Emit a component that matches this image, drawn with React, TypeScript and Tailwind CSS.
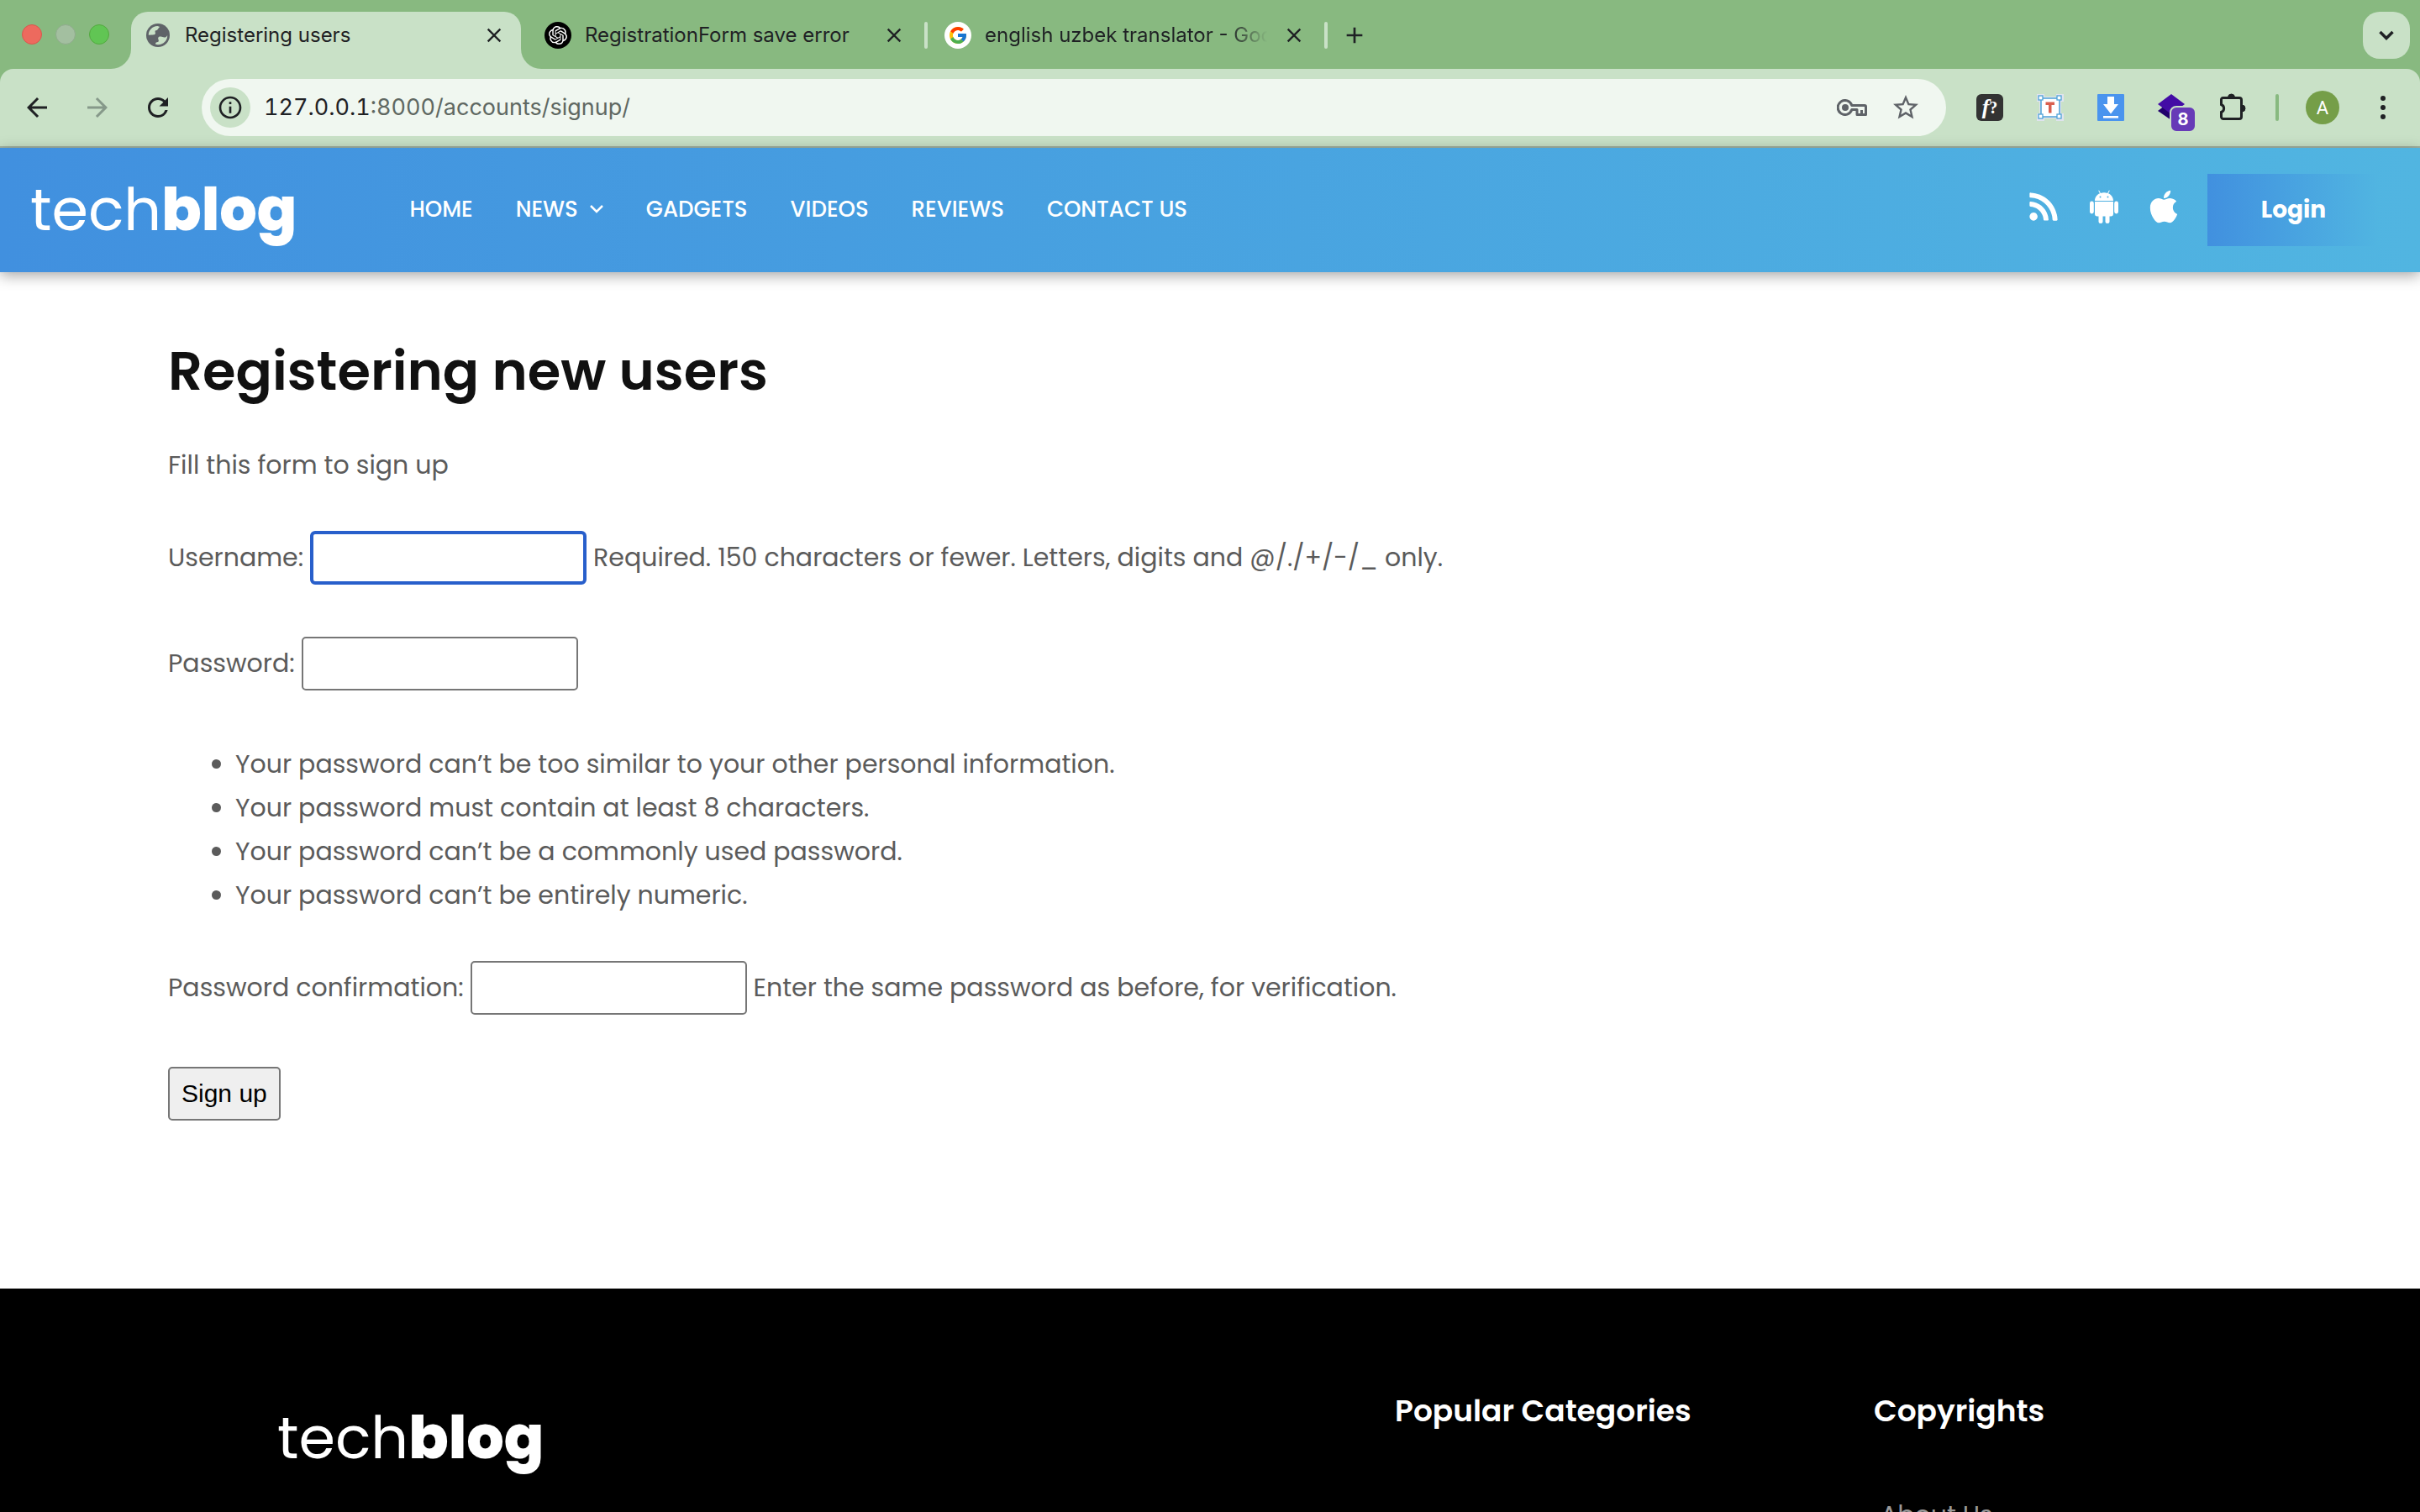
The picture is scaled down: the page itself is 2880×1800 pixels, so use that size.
import React from 'react';
import { SiOpenai } from 'react-icons/si';
import { FcGoogle } from 'react-icons/fc';
import { MdArrowBack, MdArrowForward, MdRefresh, MdClose, MdAdd, MdStarBorder, MdInfoOutline } from 'react-icons/md';
import { FaRss, FaApple } from 'react-icons/fa';

const rules = [
  'Your password can’t be too similar to your other personal information.',
  'Your password must contain at least 8 characters.',
  'Your password can’t be a commonly used password.',
  'Your password can’t be entirely numeric.',
];

function Globe() {
  return (
    <svg viewBox="0 0 28 28" className="size-7 shrink-0" aria-hidden="true">
      <circle cx="14" cy="14" r="14" fill="#5f6368" />
      <path
        d="M2.800 13.800C2.700 8 7 3.200 13.500 2.900L16.300 4C14.500 4.500 14.600 6.800 13 7.800 11.500 8.700 10.800 7.900 10.600 9.300c-.2 1.300.6 1.800.2 3-.4 1.300-2.300 1.100-4 1.100Z"
        fill="#c9e1c7"
      />
      <path
        d="M25.200 14c.2 6-4.500 11.200-11.200 11.200L11.200 24.800c-.3-1.300.2-2.300 1.600-2.500 1.400-.2 2.200-.7 2-2-.2-1.700-1.200-2.400-.3-3.700.6-1 1.600-1.200 2.800-1 1.900.2 3.300 1.200 5.400.8 1.200-.2 1.900-1.400 2.500-2.400Z"
        fill="#c9e1c7"
      />
    </svg>
  );
}

function KeyIcon() {
  return (
    <svg viewBox="0 0 36 20" className="h-5 w-9" fill="none" stroke="#5f6368" strokeWidth="3" aria-hidden="true">
      <path d="M17.800 7.500A8.500 8.500 0 1 0 17.800 12.500H24V18.500H34.500V9Q34.500 7.500 33 7.500Z" strokeLinejoin="round" />
      <circle cx="10" cy="10" r="4" fill="#5f6368" stroke="none" />
      <path d="M29.500 13V18" />
    </svg>
  );
}

function Android() {
  return (
    <svg viewBox="0 0 34 40" className="h-10 w-[34px]" fill="#fff" aria-hidden="true">
      <path d="M6 13C6 8.500 8.800 5.600 12 4.200L10.200 1l.8-.4 1.900 3.300a12.500 12.500 0 0 1 8.200 0L23 .6l.8.4L22 4.200c3.200 1.400 6 4.300 6 8.800Z" />
      <circle cx="12.500" cy="8.500" r="1" fill="#50b0e1" />
      <circle cx="21.500" cy="8.500" r="1" fill="#50b0e1" />
      <path d="M6 14h22v15a2.400 2.400 0 0 1-2.400 2.400H8.400A2.400 2.400 0 0 1 6 29Z" />
      <rect x="0" y="13.500" width="4.800" height="15" rx="2.400" />
      <rect x="29.200" y="13.500" width="4.800" height="15" rx="2.400" />
      <rect x="10.500" y="27" width="5" height="13" rx="2.500" />
      <rect x="18.500" y="27" width="5" height="13" rx="2.500" />
    </svg>
  );
}

function TextBoxIcon() {
  return (
    <svg viewBox="0 0 32 32" className="size-8" aria-hidden="true">
      <path d="M0 0H9V3H23V0H32V9H29V23H32V32H23V29H9V32H0V23H3V9H0Z" fill="#dfe3ee" />
      <rect x="5" y="5" width="22" height="22" fill="#fff" stroke="#4ea3d8" strokeWidth="1.500" />
      <g fill="#fff" stroke="#4ea3d8" strokeWidth="1.300">
        <rect x="2" y="2" width="5" height="5" />
        <rect x="24" y="2" width="5" height="5" />
        <rect x="2" y="24" width="5" height="5" />
        <rect x="24" y="24" width="5" height="5" />
      </g>
      <path d="M10.500 9.500H21V13H17.500V22.500H14V13H10.500Z" fill="#d9604f" />
    </svg>
  );
}

function DownloadIcon() {
  return (
    <svg viewBox="0 0 32 32" className="size-8" aria-hidden="true">
      <rect width="32" height="32" rx="1" fill="#4a94ee" />
      <path d="M12 3h8v9h5L16 23.500 7 12h5Z" fill="#fff" />
      <rect x="7" y="26" width="18" height="2.600" fill="#fff" />
    </svg>
  );
}

function PuzzleIcon() {
  return (
    <svg viewBox="0 0 34 34" className="size-[34px]" aria-hidden="true">
      <path
        d="M5.500 5.500H25A2.500 2.500 0 0 1 27.500 8V28A2.500 2.500 0 0 1 25 30.500H5.500A2.500 2.500 0 0 1 3.500 28.500V22.500A4.800 4.800 0 0 0 3.500 13.500V7.500A2 2 0 0 1 5.500 5.500Z"
        fill="none"
        stroke="#1f2124"
        strokeWidth="3"
      />
      <path d="M11.500 5a4 4 0 0 1 8 0ZM28 14a4 4 0 0 1 0 8Z" fill="#1f2124" stroke="#1f2124" />
    </svg>
  );
}

function CloseButton({ label }: { label: string }) {
  return (
    <button type="button" aria-label={label} className="flex size-8 shrink-0 items-center justify-center text-[#1f2124]">
      <MdClose className="size-7" />
    </button>
  );
}

function BrowserChrome() {
  return (
    <header className="bg-[#88b980] font-['Inter',sans-serif] text-[#1f2124]">
      <div className="flex h-[82px] items-end pr-3">
        <div className="flex h-[82px] w-[132px] shrink-0 items-center gap-4 pl-[26px]">
          <span className="size-6 shrink-0 rounded-full border border-[#d8584d] bg-[#ed6a5e]" />
          <span className="size-6 shrink-0 rounded-full border border-[#90ab8d] bg-[#a3bfa0]" />
          <span className="size-6 shrink-0 rounded-full border border-[#53a93f] bg-[#61c554]" />
        </div>
        <div className="size-6 shrink-0 bg-[#c9e1c7]">
          <div className="size-6 rounded-br-[24px] bg-[#88b980]" />
        </div>
        <div className="flex h-[68px] w-[464px] shrink-0 items-center rounded-t-[20px] bg-[#c9e1c7] pr-4 pb-3 pl-[18px]">
          <Globe />
          <span className="ml-[18px] flex-1 text-2xl">Registering users</span>
          <CloseButton label="Close Registering users" />
        </div>
        <div className="mr-1 size-6 shrink-0 bg-[#c9e1c7]">
          <div className="size-6 rounded-bl-[24px] bg-[#88b980]" />
        </div>
        <div className="flex h-[68px] flex-1 items-center pb-3">
          <span className="flex size-8 shrink-0 items-center justify-center rounded-full bg-black text-white">
            <SiOpenai className="size-[22px]" />
          </span>
          <span className="ml-4 w-[352px] shrink-0 text-2xl">RegistrationForm save error</span>
          <CloseButton label="Close RegistrationForm save error" />
          <span className="mr-5 ml-5 h-8 w-1 shrink-0 rounded-full bg-[#c9e1c7]" />
          <span className="flex size-8 shrink-0 items-center justify-center rounded-full bg-white">
            <FcGoogle className="size-6" />
          </span>
          <span className="ml-4 w-[336px] shrink-0 overflow-hidden whitespace-nowrap text-2xl [mask-image:linear-gradient(to_right,#000_290px,transparent_336px)]">
            english uzbek translator - Google
          </span>
          <span className="ml-4">
            <CloseButton label="Close english uzbek translator" />
          </span>
          <span className="mr-4 ml-5 h-8 w-1 shrink-0 rounded-full bg-[#c9e1c7]" />
          <button type="button" aria-label="New tab" className="flex size-8 items-center justify-center">
            <MdAdd className="size-8" />
          </button>
        </div>
        <button
          type="button"
          aria-label="Search tabs"
          className="mb-3 flex size-14 items-center justify-center rounded-[20px] bg-[#c9e1c7]"
        >
          <svg viewBox="0 0 18 12" className="h-3 w-[18px]" fill="none" stroke="#1f2124" strokeWidth="3.500">
            <path d="M1.500 2 9 9.500 16.500 2" />
          </svg>
        </button>
      </div>

      <div className="flex h-[94px] items-center rounded-t-2xl border-b-2 border-[#a3b3a0] bg-[#c9e1c7] pr-6 pl-6">
        <button type="button" aria-label="Back" className="flex size-10 items-center justify-center">
          <MdArrowBack className="size-9" />
        </button>
        <button type="button" aria-label="Forward" className="ml-8 flex size-10 items-center justify-center text-[#86998a]">
          <MdArrowForward className="size-9" />
        </button>
        <button type="button" aria-label="Reload" className="ml-8 flex size-10 items-center justify-center">
          <MdRefresh className="size-9" />
        </button>
        <div className="ml-8 flex h-[68px] flex-1 items-center rounded-full bg-[#f0f7f0] pr-[30px] pl-[10px]">
          <span className="flex size-12 shrink-0 items-center justify-center rounded-full bg-[#c9e1c7]">
            <MdInfoOutline className="size-8" />
          </span>
          <span className="ml-4 flex-1 text-[27px] text-[#5f6862] tabular-nums">
            <span className="text-[#1f2124]">127.0.0.1</span>:8000/accounts/signup/
          </span>
          <button type="button" aria-label="Passwords" className="mr-7">
            <KeyIcon />
          </button>
          <button type="button" aria-label="Bookmark" className="text-[#5f6368]">
            <MdStarBorder className="size-9" />
          </button>
        </div>
        <div className="ml-9 flex items-center gap-10">
          <button
            type="button"
            aria-label="Font finder"
            className="flex size-8 items-center justify-center rounded-md bg-[#333] font-['Liberation_Serif',serif] text-[26px] leading-8 font-bold text-white"
          >
            <i>f</i>
            <span className="text-xl leading-8">?</span>
          </button>
          <button type="button" aria-label="Text tool">
            <TextBoxIcon />
          </button>
          <button type="button" aria-label="Downloader">
            <DownloadIcon />
          </button>
          <button type="button" aria-label="Layers" className="relative size-8">
            <svg viewBox="0 0 32 32" className="size-8" aria-hidden="true">
              <path d="M0 20 16 8 32 20 16 31Z" fill="#21006b" />
              <path d="M0 12 16 0 32 12 16 24Z" fill="#430ca5" />
            </svg>
            <span className="absolute top-[14px] left-[14px] flex size-8 items-center justify-center rounded-lg border-2 border-[#c9e1c7] bg-[#673ab7] text-xl font-bold text-white">
              8
            </span>
          </button>
          <button type="button" aria-label="Extensions">
            <PuzzleIcon />
          </button>
        </div>
        <span className="ml-[34px] h-8 w-1 rounded-full bg-[#88b980]" />
        <button
          type="button"
          aria-label="Profile"
          className="ml-8 flex size-10 items-center justify-center rounded-full bg-[#759e48] font-['Roboto',sans-serif] text-[22px] text-white"
        >
          A
        </button>
        <button type="button" aria-label="Menu" className="ml-8 flex size-10 flex-col items-center justify-center gap-[5px]">
          <span className="size-1.5 rounded-full bg-[#1f2124]" />
          <span className="size-1.5 rounded-full bg-[#1f2124]" />
          <span className="size-1.5 rounded-full bg-[#1f2124]" />
        </button>
      </div>
    </header>
  );
}

function Logo() {
  return (
    <a href="#" className="block text-[70px] leading-[72px] font-normal text-white">
      tech<span className="font-extrabold">blog</span>
    </a>
  );
}

function SiteHeader() {
  return (
    <div className="relative flex h-[148px] shrink-0 items-center bg-linear-to-r from-[#4190df] to-[#51b5e1] pr-12 pl-9 text-white shadow-[0_4px_16px_rgba(0,0,0,0.35)]">
      <Logo />
      <nav className="ml-[134px] flex flex-1 items-center gap-[51px] pb-[2px] text-[26px] font-medium">
        <a href="#">HOME</a>
        <a href="#" className="flex items-center gap-[14px]">
          NEWS
          <svg viewBox="0 0 16 12" className="h-3 w-4" fill="none" stroke="#fff" strokeWidth="2.500" aria-hidden="true">
            <path d="M1 2 8 9 15 2" />
          </svg>
        </a>
        <a href="#">GADGETS</a>
        <a href="#">VIDEOS</a>
        <a href="#">REVIEWS</a>
        <a href="#">CONTACT US</a>
      </nav>
      <div className="flex items-center gap-8 pb-2">
        <a href="#" aria-label="RSS" className="mr-1">
          <FaRss className="size-[38px]" />
        </a>
        <a href="#" aria-label="Android">
          <Android />
        </a>
        <a href="#" aria-label="Apple">
          <FaApple className="size-11" />
        </a>
      </div>
      <button
        type="button"
        className="ml-[30px] h-[86px] w-[205px] bg-linear-to-r from-[#4190df] to-[#51b5e1] text-[28px] font-bold"
      >
        Login
      </button>
    </div>
  );
}

const inputClass = 'h-16 w-[329px] rounded-[5px] border-2 border-[#767676] bg-white px-2 text-black outline-none';

function SignupForm() {
  return (
    <main className="shrink-0 px-[200px] pt-[86px] pb-[200px] text-[30px] leading-[52px] text-[#5b5b5b]">
      <h1 className="mb-[54px] text-[64px] leading-[64px] font-semibold text-[#111]">Registering new users</h1>
      <p className="mb-[52px]">Fill this form to sign up</p>
      <form onSubmit={(e) => e.preventDefault()}>
        <div className="mb-[62px] flex items-center gap-2">
          <label htmlFor="username">Username:</label>
          <input
            id="username"
            type="text"
            className="h-16 w-[329px] rounded-[6px] border-4 border-[#285fcb] bg-white px-2 text-black outline-none"
          />
          <span>Required. 150 characters or fewer. Letters, digits and @/./+/-/_ only.</span>
        </div>
        <div className="mb-[62px] flex items-center gap-2">
          <label htmlFor="password1">Password:</label>
          <input id="password1" type="password" className={inputClass} />
        </div>
        <ul className="mb-[52px] list-disc pl-20">
          {rules.map((rule) => (
            <li key={rule}>{rule}</li>
          ))}
        </ul>
        <div className="mb-[62px] flex items-center gap-2">
          <label htmlFor="password2">Password confirmation:</label>
          <input id="password2" type="password" className={inputClass} />
          <span>Enter the same password as before, for verification.</span>
        </div>
        <button
          type="submit"
          className="block h-16 rounded-[5px] border-2 border-[#767676] bg-[#efefef] px-[14px] font-['Liberation_Sans',sans-serif] leading-9 text-black"
        >
          Sign up
        </button>
      </form>
    </main>
  );
}

function Footer() {
  return (
    <footer className="flex flex-1 items-start bg-black pt-[119px] pr-[330px] pl-[330px] text-white">
      <div className="flex-1 pt-[23px]">
        <Logo />
      </div>
      <div className="w-[570px]">
        <h2 className="text-[36px] leading-[54px] font-semibold">Popular Categories</h2>
      </div>
      <div className="w-[320px]">
        <h2 className="mb-[71px] text-[36px] leading-[54px] font-semibold">Copyrights</h2>
        <ul className="pl-2 text-[30px] leading-[52px] text-[#999]">
          <li>
            <a href="#">About Us</a>
          </li>
        </ul>
      </div>
    </footer>
  );
}

export default function App() {
  return (
    <div className="flex h-screen flex-col overflow-hidden bg-white font-['Poppins','Inter',sans-serif]">
      <BrowserChrome />
      <SiteHeader />
      <SignupForm />
      <Footer />
    </div>
  );
}
